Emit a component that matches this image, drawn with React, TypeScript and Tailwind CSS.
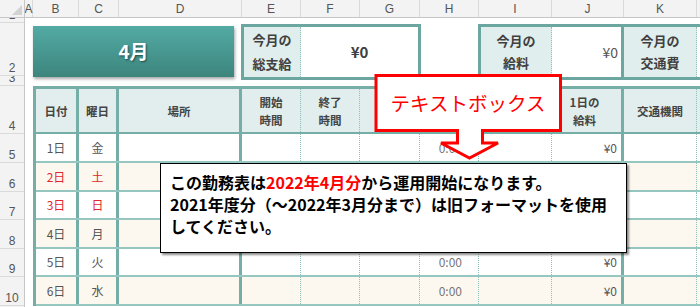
const font = "font-['Noto_Sans_CJK_JP','Noto_Sans',sans-serif]";

const colHeads = [
  { l: 'A', w: 'w-[8px]' },
  { l: 'B', w: 'w-[46px]' },
  { l: 'C', w: 'w-[40px]' },
  { l: 'D', w: 'w-[123px]' },
  { l: 'E', w: 'w-[59px]' },
  { l: 'F', w: 'w-[59px]' },
  { l: 'G', w: 'w-[60px]' },
  { l: 'H', w: 'w-[59px]' },
  { l: 'I', w: 'w-[73px]' },
  { l: 'J', w: 'w-[72px]' },
  { l: 'K', w: 'w-[73px]' },
  { l: 'L', w: 'w-[80px]' },
];

const rowHeads = [
  { n: '1', h: 'h-[5px]' },
  { n: '2', h: 'h-[53px]' },
  { n: '3', h: 'h-[10px]' },
  { n: '4', h: 'h-[48px]' },
  { n: '5', h: 'h-[29px]' },
  { n: '6', h: 'h-[29px]' },
  { n: '7', h: 'h-[28px]' },
  { n: '8', h: 'h-[29px]' },
  { n: '9', h: 'h-[28px]' },
  { n: '10', h: 'h-[29px]' },
  { n: '11', h: 'h-[29px]' },
];

const days = [
  { d: '1日', w: '金', red: false, time: true },
  { d: '2日', w: '土', red: true, time: false },
  { d: '3日', w: '日', red: true, time: false },
  { d: '4日', w: '月', red: false, time: false },
  { d: '5日', w: '火', red: false, time: true },
  { d: '6日', w: '水', red: false, time: true },
];
const rowH = ['h-[29px]', 'h-[29px]', 'h-[28px]', 'h-[29px]', 'h-[28px]', 'h-[29px]'];

const solid = 'border-r-[3px] border-r-[#74aea7]';
const dotted = 'border-r border-dotted border-r-[#8cc0b9]';

function Cells({ head, row }: { head?: boolean; row?: (typeof days)[number] }) {
  const txt = head
    ? 'text-[11.5px] font-bold text-[#444] leading-[18px]'
    : 'text-[12px] text-[#555]';
  const red = row?.red ? 'text-[#e3262c]' : '';
  return (
    <>
      <div className={`w-[43px] ${solid} flex items-center justify-center ${txt} ${red}`}>
        {head ? '日付' : row?.d}
      </div>
      <div className={`w-[40px] ${solid} flex items-center justify-center ${txt} ${red}`}>
        {head ? '曜日' : row?.w}
      </div>
      <div className={`w-[123px] ${solid} flex items-center justify-center ${txt}`}>
        {head ? '場所' : ''}
      </div>
      <div className={`w-[59px] ${dotted} flex items-center justify-center text-center ${txt}`}>
        {head ? <span>開始<br />時間</span> : ''}
      </div>
      <div className={`w-[59px] ${dotted} flex items-center justify-center text-center ${txt}`}>
        {head ? <span>終了<br />時間</span> : ''}
      </div>
      <div className={`w-[60px] ${dotted}`} />
      <div className={`w-[59px] ${dotted} flex items-center justify-end pr-[16px] ${txt} text-[#777]`}>
        {row?.time ? '0:00' : ''}
      </div>
      <div className={`w-[73px] ${dotted}`} />
      <div className={`w-[72px] ${solid} flex items-center justify-end pr-[4px] text-center ${txt}`}>
        {head ? <span className="mx-auto">1日の<br />給料</span> : row?.time ? '¥0' : ''}
      </div>
      <div className={`w-[73px] ${dotted} flex items-center justify-center ${txt}`}>
        {head ? '交通機関' : ''}
      </div>
      <div className="flex-1" />
    </>
  );
}

export default function App() {
  return (
    <div className={`relative w-[700px] h-[307px] overflow-hidden bg-white ${font}`}>
      {/* column header */}
      <div className="flex h-[18px] bg-[#f3f3f3] border-b border-[#c6c6c6] font-['Liberation_Sans',sans-serif] text-[12px] text-[#555]">
        <div className="w-[25px] shrink-0 border-r border-[#c6c6c6] relative">
          <div className="absolute right-[2px] bottom-[2px] w-0 h-0 border-l-[10px] border-l-transparent border-b-[10px] border-b-[#d2d2d2]" />
        </div>
        {colHeads.map((c) => (
          <div
            key={c.l}
            className={`${c.w} shrink-0 border-r border-[#dadada] flex items-center justify-center leading-none`}
          >
            {c.l}
          </div>
        ))}
      </div>

      <div className="flex">
        {/* row header */}
        <div className="w-[25px] shrink-0 bg-[#f3f3f3] border-r border-[#c6c6c6] font-['Liberation_Sans',sans-serif] text-[12px] text-[#555]">
          {rowHeads.map((r) => (
            <div
              key={r.n}
              className={`${r.h} border-b border-[#dadada] flex items-end justify-center overflow-hidden leading-[14px]`}
            >
              {r.n}
            </div>
          ))}
        </div>

        {/* sheet */}
        <div className="flex-1 flex flex-col">
          <div className="h-[68px] flex items-start pl-[8px]">
            <div className="mt-[8px] w-[201px] h-[51px] bg-gradient-to-b from-[#53aba4] to-[#3c857d] shadow-[1px_2px_3px_rgba(0,0,0,0.35)] flex items-center justify-center">
              <span className="text-white font-bold text-[19px] [text-shadow:1px_1px_2px_rgba(0,0,0,0.5)]">4月</span>
            </div>

            <div className="ml-[7px] mt-[6px] w-[180px] h-[56px] border-[3px] border-[#6ba7a0] flex">
              <div className="w-[57px] bg-[#e0eeed] border-r border-dotted border-r-[#8cc0b9] flex items-center justify-center text-center text-[13px] font-bold text-[#404040] leading-[24px]">
                <span>今月の<br />総支給</span>
              </div>
              <div className="flex-1 flex items-center justify-center text-[15px] font-bold text-[#404040]">¥0</div>
            </div>

            <div className="ml-[57px] mt-[6px] flex-1 h-[56px] border-[3px] border-r-0 border-[#6ba7a0] flex">
              <div className="w-[71px] bg-[#e0eeed] border-r border-dotted border-r-[#8cc0b9] flex items-center justify-center text-center text-[13px] font-bold text-[#404040] leading-[22px]">
                <span>今月の<br />給料</span>
              </div>
              <div className="w-[72px] border-r-[3px] border-r-[#6ba7a0] flex items-center justify-end pr-[3px] text-[14px] text-[#555]">¥0</div>
              <div className="w-[73px] bg-[#e0eeed] border-r border-dotted border-r-[#8cc0b9] flex items-center justify-center text-center text-[13px] font-bold text-[#404040] leading-[22px]">
                <span>今月の<br />交通費</span>
              </div>
              <div className="flex-1" />
            </div>
          </div>

          {/* table */}
          <div className="ml-[8px] border-l-[3px] border-t-[3px] border-[#74aea7]">
            <div className="flex h-[45px] bg-[#e1eeed] border-b-2 border-[#74aea7]">
              <Cells head />
            </div>
            {days.map((r, i) => (
              <div
                key={r.d}
                className={`flex ${rowH[i]} border-b-2 border-[#95c6bf] ${i % 2 === 1 ? 'bg-[#fcf8f0]' : 'bg-white'}`}
              >
                <Cells row={r} />
              </div>
            ))}
          </div>
        </div>
      </div>

      {/* callout */}
      <svg className="absolute inset-0 pointer-events-none" width="700" height="307" viewBox="0 0 700 307">
        <polygon
          points="376,75.5 560.5,75.5 560.5,130.5 482.5,130.5 482.5,143 498,143 469.5,158 441,143 457.5,143 457.5,130.5 376,130.5"
          fill="#ffffff"
          stroke="#ff0000"
          strokeWidth="3"
        />
      </svg>
      <div className="absolute left-[377px] top-[77px] w-[182px] h-[52px] flex items-center justify-center text-[19.5px] text-[#ff0000] leading-none">
        テキストボックス
      </div>

      {/* text box */}
      <div className="absolute left-[160px] top-[163px] w-[467px] h-[90px] bg-white border-[1.5px] border-black shadow-[2px_2px_2px_rgba(0,0,0,0.45)] pl-[9px] pt-[7px] text-[16px] font-bold text-black leading-[22px]">
        <div>
          この勤務表は<span className="text-[#ff0000]">2022年4月分</span>から運用開始になります。
        </div>
        <div>2021年度分（～2022年3月分まで）は旧フォーマットを使用</div>
        <div>してください。</div>
      </div>
    </div>
  );
}
